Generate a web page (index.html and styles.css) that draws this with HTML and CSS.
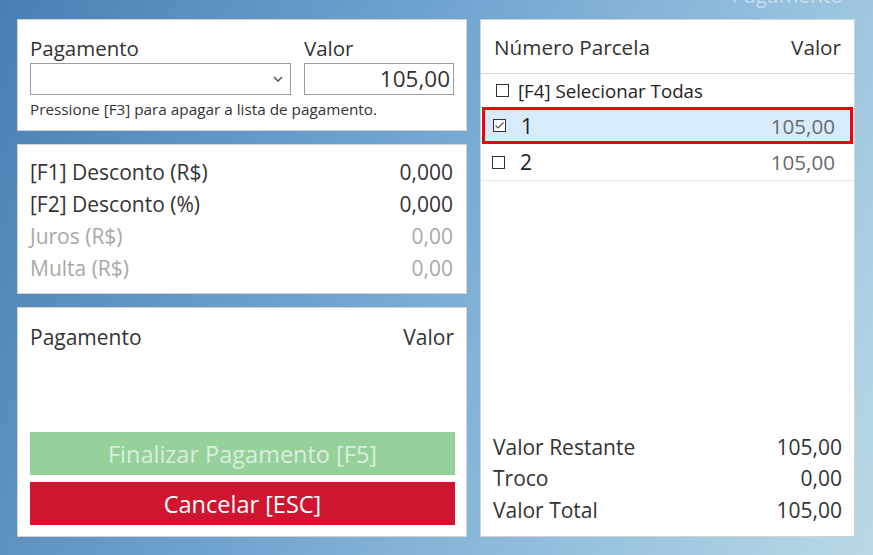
FILE: index.html
```html
<!DOCTYPE html>
<html lang="pt-BR">
<head>
<meta charset="utf-8">
<title>Pagamento</title>
<link rel="stylesheet" href="styles.css">
</head>
<body>
<div class="window-title">Pagamento</div>
<div class="app">
  <div class="left">
    <section class="panel panel-entry">
      <div class="entry-grid">
        <div class="field field-pay">
          <label class="lbl">Pagamento</label>
          <div class="combo">
            <svg class="chev" width="10" height="6" viewBox="0 0 10 6"><polyline points="1,1 5,5 9,1" fill="none" stroke="#444" stroke-width="1.3"/></svg>
          </div>
        </div>
        <div class="field field-val">
          <label class="lbl">Valor</label>
          <div class="input">105,00</div>
        </div>
      </div>
      <div class="hint">Pressione [F3] para apagar a lista de pagamento.</div>
    </section>

    <section class="panel panel-disc">
      <div class="row"><span>[F1] Desconto (R$)</span><span>0,000</span></div>
      <div class="row"><span>[F2] Desconto (%)</span><span>0,000</span></div>
      <div class="row muted"><span>Juros (R$)</span><span>0,00</span></div>
      <div class="row muted"><span>Multa (R$)</span><span>0,00</span></div>
    </section>

    <section class="panel panel-pay">
      <div class="row head"><span>Pagamento</span><span>Valor</span></div>
      <div class="spacer"></div>
      <button class="btn btn-ok">Finalizar Pagamento [F5]</button>
      <button class="btn btn-cancel">Cancelar [ESC]</button>
    </section>
  </div>

  <section class="panel right">
    <div class="list-head"><span>Número Parcela</span><span>Valor</span></div>
    <div class="list-all">
      <svg class="cb" width="13" height="13" viewBox="0 0 13 13"><rect x="0.5" y="0.5" width="12" height="12" fill="#fff" stroke="#333"/></svg>
      <span>[F4] Selecionar Todas</span>
    </div>
    <div class="item selected">
      <div class="item-l">
        <svg class="cb" width="13" height="13" viewBox="0 0 13 13"><rect x="0.5" y="0.5" width="12" height="12" fill="#fff" stroke="#333"/><polyline points="2.5,6.5 5,9 10.5,3.5" fill="none" stroke="#555" stroke-width="1.2"/></svg>
        <span class="num">1</span>
      </div>
      <span class="val">105,00</span>
    </div>
    <div class="item">
      <div class="item-l">
        <svg class="cb" width="13" height="13" viewBox="0 0 13 13"><rect x="0.5" y="0.5" width="12" height="12" fill="#fff" stroke="#333"/></svg>
        <span class="num">2</span>
      </div>
      <span class="val">105,00</span>
    </div>
    <div class="fill"></div>
    <div class="summary">
      <div class="row"><span>Valor Restante</span><span>105,00</span></div>
      <div class="row"><span>Troco</span><span>0,00</span></div>
      <div class="row"><span>Valor Total</span><span>105,00</span></div>
    </div>
  </section>
</div>
</body>
</html>
```

FILE: styles.css
```css
* { box-sizing: border-box; }
html, body { margin: 0; padding: 0; }
body {
  width: 873px;
  height: 555px;
  overflow: hidden;
  position: relative;
  font-family: "Open Sans", "Noto Sans", sans-serif;
  color: #333;
  background: linear-gradient(112deg, #4a7fb4 0%, #6fa3cf 40%, #92bedd 70%, #bad9e6 100%);
}
.window-title {
  position: absolute;
  top: -19px;
  right: 30px;
  font-size: 21px;
  line-height: 28px;
  color: rgba(235, 242, 248, 0.6);
}
.app {
  display: flex;
  gap: 13px;
  padding: 19px 18px 18px 17px;
  height: 555px;
}
.left {
  width: 450px;
  display: flex;
  flex-direction: column;
  gap: 13px;
}
.panel {
  background: #fff;
  border: 1px solid #cfd3d6;
}
.panel-entry {
  height: 112px;
  padding: 14px 12px 0 12px;
}
.entry-grid {
  display: flex;
  gap: 13px;
}
.field-pay { width: 261px; }
.field-val { flex: 1; }
.lbl {
  display: block;
  font-size: 20.5px;
  line-height: 29px;
  color: #333;
}
.combo {
  height: 32px;
  border: 1px solid #9c9c9c;
  position: relative;
  display: flex;
  justify-content: flex-end;
  align-items: center;
  padding-right: 7px;
}
.input {
  height: 32px;
  border: 1px solid #9c9c9c;
  text-align: right;
  padding-right: 3px;
  font-size: 22.5px;
  line-height: 30px;
  color: #333;
}
.hint {
  font-size: 15.3px;
  margin-top: 4px;
  line-height: 20px;
  color: #333;
}
.panel-disc {
  height: 150px;
  padding: 11px 13px 0 12px;
}
.row {
  display: flex;
  justify-content: space-between;
  font-size: 21px;
  line-height: 32px;
  height: 32px;
  color: #333;
}
.row.muted { color: #a8a8a8; }
.panel-pay {
  height: 230px;
  padding: 13px 11px 11px 12px;
  display: flex;
  flex-direction: column;
}
.panel-pay .row.head { padding-right: 1px; }
.spacer { flex: 1; }
.btn {
  display: block;
  width: 100%;
  height: 43px;
  border: none;
  font-family: inherit;
  font-size: 23.5px;
  padding: 0;
}
.btn-ok {
  background: #96d09b;
  color: #d9efdb;
  margin-bottom: 7px;
}
.btn-cancel {
  background: #d01530;
  color: #fff;
}
.right {
  width: 375px;
  display: flex;
  flex-direction: column;
  padding: 0 0 10px 0;
}
.list-head {
  display: flex;
  justify-content: space-between;
  height: 54px;
  align-items: center;
  padding: 0 13px 0 13px;
  font-size: 20.7px;
  color: #333;
  border-bottom: 1px solid #d6d6d6;
}
.list-all {
  height: 33px;
  display: flex;
  align-items: center;
  padding-left: 15px;
  gap: 9px;
  font-size: 18.7px;
  color: #222;
}
.cb { flex: none; display: block; }
.item {
  height: 37px;
  display: flex;
  align-items: center;
  justify-content: space-between;
  padding: 0 19px 0 11px;
  border-bottom: 1px solid #e4e4e4;
}
.item.selected {
  margin: 0 1px 0 1px;
  background: #d8ebfa;
  border: 3px solid #f0000a;
  padding: 0 15px 0 8px;
}
.item-l {
  display: flex;
  align-items: center;
  gap: 15px;
}
.num {
  font-size: 21px;
  color: #222;
}
.val {
  font-size: 20.6px;
  color: #6a6a6a;
}
.fill { flex: 1; }
.summary {
  padding: 0 12px 0 12px;
}
.summary .row { height: 31.5px; line-height: 31.5px; }
```
